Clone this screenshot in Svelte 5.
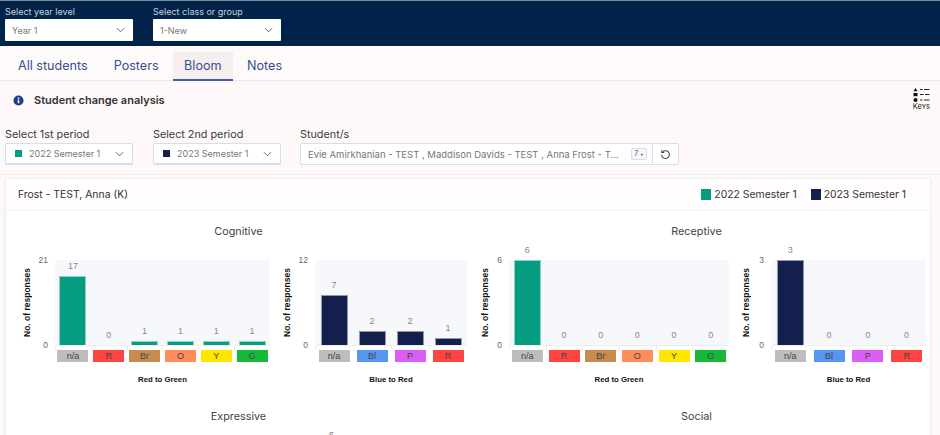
<script>
  const rg = ['n/a', 'R', 'Br', 'O', 'Y', 'G'];
  const br = ['n/a', 'Bl', 'P', 'R'];
  const chipClass = { 'n/a': 'na', R: 'red', Br: 'brown', O: 'orange', Y: 'yellow', G: 'green', Bl: 'blue', P: 'purple' };
  const PLOT_H = 85;

  const groups = [
    {
      title: 'Cognitive',
      charts: [
        { key: 'c1', max: 21, cats: rg, values: [17, 0, 1, 1, 1, 1], tone: 'first', label: 'Red to Green' },
        { key: 'c2', max: 12, cats: br, values: [7, 2, 2, 1], tone: 'second', label: 'Blue to Red' }
      ]
    },
    {
      title: 'Receptive',
      charts: [
        { key: 'c3', max: 6, cats: rg, values: [6, 0, 0, 0, 0, 0], tone: 'first', label: 'Red to Green' },
        { key: 'c4', max: 3, cats: br, values: [3, 0, 0, 0], tone: 'second', label: 'Blue to Red' }
      ]
    }
  ];
</script>

<div class="page">
  <header class="top">
    <div class="top-field">
      <span class="top-label">Select year level</span>
      <div class="select top-select"><span>Year 1</span>
        <svg class="chev" viewBox="0 0 10 6"><path d="M1 1l4 4 4-4" /></svg>
      </div>
    </div>
    <div class="top-field">
      <span class="top-label">Select class or group</span>
      <div class="select top-select"><span>1-New</span>
        <svg class="chev" viewBox="0 0 10 6"><path d="M1 1l4 4 4-4" /></svg>
      </div>
    </div>
  </header>

  <nav class="tabs">
    <span class="tab">All students</span>
    <span class="tab">Posters</span>
    <span class="tab active">Bloom</span>
    <span class="tab">Notes</span>
  </nav>

  <section class="intro">
    <div class="heading">
      <svg class="info" viewBox="0 0 12 12">
        <circle cx="6" cy="6" r="5.5" fill="#1d3f8f" />
        <rect x="5.2" y="5" width="1.6" height="4" fill="#fff" />
        <rect x="5.2" y="2.8" width="1.6" height="1.5" fill="#fff" />
      </svg>
      <span>Student change analysis</span>
    </div>
    <div class="keys">
      <svg viewBox="0 0 17 14" class="keys-icon">
        <path d="M2.500 0l2 3.200h-4z" fill="#111" />
        <rect x="0.500" y="5" width="4" height="3.200" fill="#111" />
        <circle cx="2.500" cy="12" r="2" fill="#111" />
        <path d="M7 1.500h2.500M11 1.500h5.500M7 6.500h3.500M12 6.500h4.500M7 12h2.500M11 12h5.500" stroke="#222" stroke-width="1" fill="none" />
      </svg>
      <span>Keys</span>
    </div>
  </section>

  <section class="filters">
    <div class="field">
      <span class="f-label">Select 1st period</span>
      <div class="select outlined">
        <i class="sq first"></i><span>2022 Semester 1</span>
        <svg class="chev" viewBox="0 0 10 6"><path d="M1 1l4 4 4-4" /></svg>
      </div>
    </div>
    <div class="field">
      <span class="f-label">Select 2nd period</span>
      <div class="select outlined">
        <i class="sq second"></i><span>2023 Semester 1</span>
        <svg class="chev" viewBox="0 0 10 6"><path d="M1 1l4 4 4-4" /></svg>
      </div>
    </div>
    <div class="field students">
      <span class="f-label">Student/s</span>
      <div class="student-box">
        <span class="student-text">Evie Amirkhanian - TEST , Maddison Davids - TEST , Anna Frost - T...</span>
        <span class="badge">7 <b>+</b></span>
        <span class="reset">
          <svg viewBox="0 0 14 14"><path d="M3.300 3.800A5 5 0 1 1 2 7.500" /><path d="M2.300 1.500v3h3" /></svg>
        </span>
      </div>
    </div>
  </section>

  <div class="rule"></div>

  <section class="card">
    <div class="card-head">
      <span class="name">Frost - TEST, Anna (K)</span>
      <div class="legend">
        <span class="leg"><i class="lsq first"></i>2022 Semester 1</span>
        <span class="leg"><i class="lsq second"></i>2023 Semester 1</span>
      </div>
    </div>

    <div class="groups">
      {#each groups as g}
        <div class="group">
          <h3 class="g-title">{g.title}</h3>
          <div class="charts">
            {#each g.charts as c}
              <div class="chart {c.key}">
                <div class="y-name"><span>No. of responses</span></div>
                <div class="ticks"><span>{c.max}</span><span>0</span></div>
                <div class="body">
                  <div class="plot">
                    {#each c.values as v}
                      <div class="cell">
                        <span class="val">{v}</span>
                        {#if v > 0}
                          <div class="bar {c.tone}" style="height:{(v / c.max) * PLOT_H}px"></div>
                        {/if}
                      </div>
                    {/each}
                  </div>
                  <div class="cats">
                    {#each c.cats as cat}
                      <div class="cat"><span class="chip {chipClass[cat]}">{cat}</span></div>
                    {/each}
                  </div>
                  <div class="x-name">{c.label}</div>
                </div>
              </div>
            {/each}
          </div>
        </div>
      {/each}

      <div class="group">
        <h3 class="g-title">Expressive</h3>
        <div class="peek">6</div>
      </div>
      <div class="group">
        <h3 class="g-title">Social</h3>
      </div>
    </div>
  </section>
</div>

<style>
  :global(body) {
    margin: 0;
    background: #fef9f8;
    overflow: hidden;
  }
  .page {
    width: 940px;
    height: 435px;
    overflow: hidden;
    font-family: Inter, "Open Sans", sans-serif;
    color: #333;
    background: #fef9f8;
  }
  .top {
    box-sizing: border-box;
    height: 46px;
    background: #012349;
    border-top: 1px solid #7f8a99;
    padding: 4px 0 0 5px;
    display: flex;
    gap: 20px;
  }
  .top-field {
    display: flex;
    flex-direction: column;
    width: 128px;
  }
  .top-label {
    font-size: 9px;
    line-height: 14px;
    color: #c9d1dc;
  }
  .select {
    box-sizing: border-box;
    height: 22px;
    width: 128px;
    background: #fff;
    display: flex;
    align-items: center;
    font-size: 9px;
    color: #777;
    padding: 0 8px 0 7px;
  }
  .top-select {
    border-radius: 1px;
  }
  .chev {
    margin-left: auto;
    width: 9px;
    height: 6px;
    fill: none;
    stroke: #3e5c9a;
    stroke-width: 1;
  }
  .tabs {
    box-sizing: border-box;
    height: 35px;
    padding: 6px 0 0 6px;
    display: flex;
    border-bottom: 1px solid #f3e6e6;
    background: #fffafa;
  }
  .tab {
    box-sizing: border-box;
    height: 29px;
    padding: 0 12px;
    margin-right: 2px;
    font-size: 12.6px;
    line-height: 27px;
    color: #34508f;
  }
  .tab.active {
    background: #f6eeee;
    border-bottom: 2px solid #42609f;
    padding: 0 11.5px;
  }
  .intro {
    box-sizing: border-box;
    height: 46px;
    padding: 9px 10px 0 13px;
    display: flex;
    justify-content: space-between;
  }
  .heading {
    display: flex;
    align-items: center;
    gap: 10px;
    height: 20px;
    font-size: 11px;
    font-weight: 600;
    color: #333;
  }
  .info {
    width: 11px;
    height: 11px;
  }
  .keys {
    display: flex;
    flex-direction: column;
    align-items: center;
    margin-top: -2px;
    font-size: 7.5px;
    font-variant: small-caps;
    color: #222;
    line-height: 8px;
  }
  .keys-icon {
    width: 17px;
    height: 14px;
    margin-bottom: 1px;
  }
  .filters {
    display: flex;
    gap: 20px;
    padding-left: 5px;
    height: 47px;
  }
  .field {
    display: flex;
    flex-direction: column;
  }
  .f-label {
    font-size: 10.8px;
    line-height: 16px;
    color: #3a3a3a;
  }
  .outlined {
    height: 22px;
    border: 1px solid #d5deef;
    border-bottom-width: 2px;
    border-radius: 2px;
    padding-left: 9px;
    color: #777;
  }
  .sq {
    width: 7px;
    height: 7px;
    margin-right: 7px;
  }
  .first {
    background: #069c80;
  }
  .second {
    background: #13204d;
  }
  .students {
    margin-left: -1px;
  }
  .student-box {
    box-sizing: border-box;
    width: 379px;
    height: 22px;
    display: flex;
    align-items: center;
    background: #fff;
    border: 1px solid #d5deef;
    border-radius: 2px;
  }
  .student-text {
    padding-left: 7px;
    width: 323px;
    flex: none;
    box-sizing: border-box;
    white-space: nowrap;
    overflow: hidden;
    font-size: 9.5px;
    color: #777;
  }
  .badge {
    box-sizing: border-box;
    width: 16px;
    height: 12px;
    margin-left: 7px;
    border: 1px solid #d5deef;
    border-radius: 2px;
    background: #f5f7fb;
    font-size: 7px;
    line-height: 10px;
    text-align: center;
    color: #555;
  }
  .badge b {
    font-size: 5px;
  }
  .reset {
    margin-left: auto;
    width: 25px;
    height: 20px;
    border-left: 1px solid #d5deef;
    display: flex;
    align-items: center;
    justify-content: center;
  }
  .reset svg {
    width: 11px;
    height: 11px;
    fill: none;
    stroke: #444;
    stroke-width: 1.3;
  }
  .rule {
    height: 1px;
    background: #f5ecec;
    margin-bottom: 3px;
  }
  .card {
    box-sizing: border-box;
    margin-left: 5px;
    width: 926px;
    background: #fff;
    border: 1px solid #efefef;
    border-radius: 3px;
    box-shadow: -1px 0 3px rgba(0, 0, 0, 0.04);
    height: 300px;
  }
  .card-head {
    box-sizing: border-box;
    height: 32px;
    display: flex;
    align-items: center;
    justify-content: space-between;
    padding: 0 24px 0 12px;
    border-bottom: 1px solid #f0eeee;
    background: #fffdfd;
  }
  .name {
    font-size: 10.400px;
    color: #333;
  }
  .legend {
    display: flex;
    gap: 14px;
  }
  .leg {
    display: flex;
    align-items: center;
    gap: 3px;
    font-size: 10.400px;
    color: #333;
  }
  .lsq {
    width: 10px;
    height: 11px;
  }
  .groups {
    display: grid;
    grid-template-columns: 465px 1fr;
    padding-top: 14px;
  }
  .g-title {
    margin: 0;
    font-size: 10.8px;
    line-height: 14px;
    font-weight: 400;
    text-align: center;
    color: #444;
  }
  .group:nth-child(even) .g-title {
    padding-right: 8px;
  }
  .peek {
    margin: 6px 0 0 323px;
    font: 9px/10px "Liberation Sans", sans-serif;
    color: #777;
  }
  .charts {
    display: flex;
    margin-top: 21px;
    height: 150px;
  }
  .chart {
    display: flex;
    align-items: flex-start;
  }
  .c1 { width: 264px; }
  .c2 { width: 197px; }
  .c3 { width: 258px; }
  .c4 { width: 197px; }
  .c1 .body { width: 215px; }
  .c2 .body { width: 152px; }
  .c3 .body { width: 220px; }
  .c4 .body { width: 155px; }
  .y-name {
    margin-left: auto;
    height: 85px;
    display: flex;
    align-items: center;
    justify-content: center;
    width: 10px;
    font: bold 8.500px/10px "Liberation Sans", sans-serif;
    color: #111;
  }
  .y-name span {
    writing-mode: vertical-rl;
    transform: rotate(180deg);
    white-space: nowrap;
  }
  .ticks {
    width: 23px;
    height: 85px;
    box-sizing: border-box;
    padding-right: 7px;
    display: flex;
    flex-direction: column;
    justify-content: space-between;
    align-items: flex-end;
    font: 8.500px/0 "Liberation Sans", sans-serif;
    color: #666;
  }
  .ticks span {
    height: 0;
  }
  .c3 .y-name { margin-right: -4px; }
  .c4 .y-name { margin-right: -3px; }
  .body {
    flex: none;
  }
  .plot {
    height: 85px;
    display: flex;
    background: #f7f8fb;
    border-bottom: 1px solid #eeeeee;
  }
  .cell {
    flex: 1;
    height: 85px;
    display: flex;
    flex-direction: column;
    justify-content: flex-end;
    align-items: center;
  }
  .val {
    font: 9px/20px "Liberation Sans", sans-serif;
    color: #888;
    flex: none;
    height: 20px;
  }
  .cell .bar {
    width: 27px;
    flex: none;
    box-sizing: border-box;
    border: 1px solid rgba(255, 255, 255, 0.55);
    border-bottom: 0;
  }
  .cats {
    display: flex;
    height: 16px;
  }
  .cat {
    flex: 1;
    display: flex;
    justify-content: center;
    padding-top: 4px;
    background: linear-gradient(#eeeeee, #eeeeee) left top / 1px 4px no-repeat;
  }
  .chip {
    width: 31px;
    height: 12px;
    font: 9px/12px "Liberation Sans", sans-serif;
    text-align: center;
    color: #444;
  }
  .na { background: #bdbdbd; }
  .red { background: #ff4444; }
  .brown { background: #c68c4e; }
  .orange { background: #ff8c5a; }
  .yellow { background: #ffe600; }
  .green { background: #16b83a; }
  .blue { background: #5596f0; }
  .purple { background: #dd5ef5; }
  .x-name {
    margin-top: 13px;
    text-align: center;
    font: bold 7.800px/10px "Liberation Sans", sans-serif;
    color: #111;
  }
</style>
